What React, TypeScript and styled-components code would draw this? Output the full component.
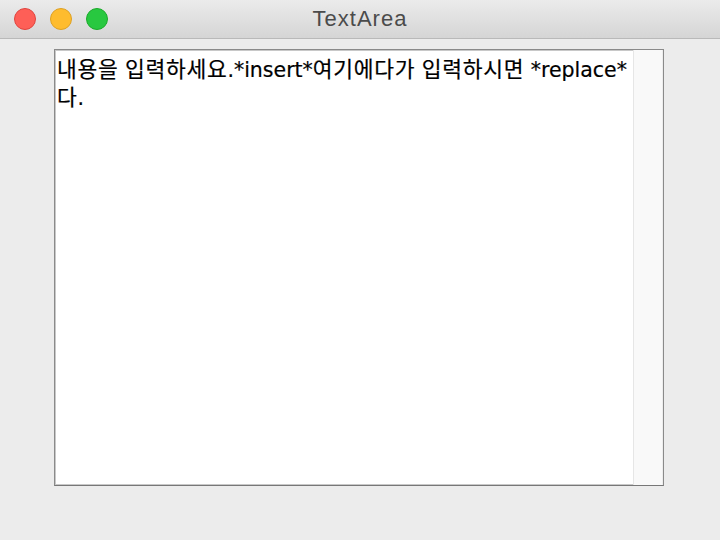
import styled, { createGlobalStyle } from "styled-components";

const GlobalStyle = createGlobalStyle`
  html, body {
    margin: 0;
    padding: 0;
    background: #ececec;
  }
`;

const Window = styled.div`
  width: 720px;
  height: 540px;
  display: flex;
  flex-direction: column;
  background: #ececec;
  overflow: hidden;
`;

const TitleBar = styled.div`
  position: relative;
  height: 38px;
  flex: none;
  display: flex;
  align-items: center;
  justify-content: center;
  background: linear-gradient(#ebebeb, #d5d5d5);
  border-bottom: 1px solid #b9b9b9;
  font-family: "Liberation Sans", sans-serif;
  font-size: 22px;
  letter-spacing: 1px;
  color: #4b4b4b;
`;

const Lights = styled.div`
  position: absolute;
  left: 14px;
  top: 8px;
  display: flex;
  gap: 14px;
`;

const Light = styled.span<{ $fill: string; $edge: string }>`
  width: 22px;
  height: 22px;
  border-radius: 50%;
  box-sizing: border-box;
  background: ${(p) => p.$fill};
  border: 1px solid ${(p) => p.$edge};
`;

const Body = styled.div`
  flex: 1;
  padding: 10px 56px 0 54px;
`;

const Field = styled.div`
  height: 437px;
  box-sizing: border-box;
  border: 1px solid #8a8a8a;
  border-bottom-color: #777;
  box-shadow: inset 0 0 0 1px #c8c8c8;
  background: #fff;
  display: flex;
`;

const Text = styled.div`
  flex: 1;
  padding: 5px 0 0 2px;
  font-family: "DejaVu Sans", "Noto Sans CJK KR", sans-serif;
  font-size: 20.5px;
  line-height: 25px;
  color: #000;
  -webkit-text-stroke: 0.2px #000;
  word-break: break-all;
  white-space: pre-wrap;
`;

// hangul runs are set a bit wider, like the mac system font
const Hangul = styled.span`
  font-family: "Noto Sans CJK KR", sans-serif;
  font-size: 21.5px;
  letter-spacing: 0.7px;
`;

const Track = styled.div`
  width: 28px;
  flex: none;
  background: #f9f9f9;
  border-left: 1px solid #e6e6e6;
  border-right: 1px solid #ededed;
`;

export default function App() {
  return (
    <Window>
      <GlobalStyle />
      <TitleBar>
        <Lights>
          <Light $fill="#fe5f57" $edge="#e0443e" />
          <Light $fill="#febc2e" $edge="#dea123" />
          <Light $fill="#28c840" $edge="#1aab29" />
        </Lights>
        TextArea
      </TitleBar>
      <Body>
        <Field>
          <Text>
            <Hangul>내용을</Hangul> <Hangul>입력하세요</Hangul>.*insert*
            <Hangul>여기에다가</Hangul> <Hangul>입력하시면</Hangul> *replace*
            <Hangul>다</Hangul>.
          </Text>
          <Track />
        </Field>
      </Body>
    </Window>
  );
}
